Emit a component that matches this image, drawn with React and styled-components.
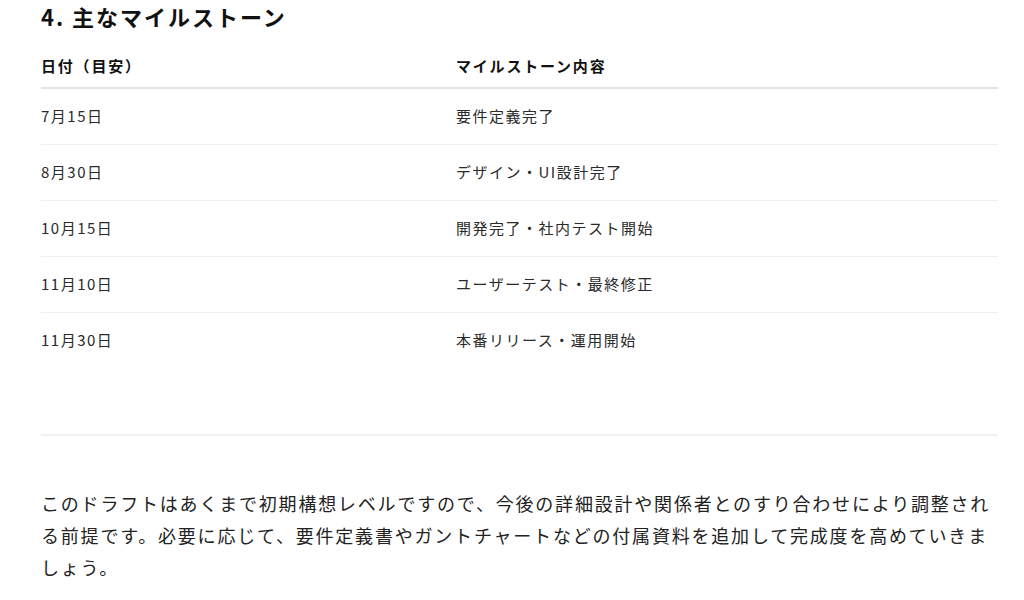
import React from "react";
import styled, { createGlobalStyle } from "styled-components";

const Global = createGlobalStyle`
  html, body { margin: 0; padding: 0; background: #ffffff; }
  body {
    font-family: "Noto Sans CJK JP", "Noto Sans", sans-serif;
    color: #1f1f1f;
  }
`;

const Page = styled.div`
  padding: 0 26px 0 41px;
`;

const Heading = styled.h2`
  margin: 0;
  padding-top: 2px;
  font-size: 22px;
  line-height: 28px;
  font-weight: 700;
  letter-spacing: 0.09em;
  color: #111;
`;

const Table = styled.table`
  width: 100%;
  border-collapse: collapse;
  margin-top: 17px;
`;

const HeadCell = styled.th`
  text-align: left;
  padding: 8px 0 10px;
  line-height: 22px;
  vertical-align: middle;
  font-size: 15px;
  font-weight: 700;
  letter-spacing: 0.12em;
  color: #111;
  border-bottom: 2px solid #e4e4e4;
  width: ${(p) => (p.$first ? "415px" : "auto")};
`;

const Cell = styled.td`
  padding: 16px 0 17px;
  line-height: 22px;
  vertical-align: middle;
  font-size: 15px;
  letter-spacing: 0.1em;
  color: #2a2a2a;
  border-bottom: ${(p) => (p.$last ? "none" : "1px solid #efefef")};
`;

const Rule = styled.hr`
  border: none;
  border-top: 2px solid #f1f1f1;
  margin: 66px 0 0;
`;

const Paragraph = styled.p`
  margin: 51px 0 0;
  font-size: 18px;
  line-height: 32px;
  letter-spacing: 0.1em;
  color: #222;
`;

const rows = [
  ["7月15日", "要件定義完了"],
  ["8月30日", "デザイン・UI設計完了"],
  ["10月15日", "開発完了・社内テスト開始"],
  ["11月10日", "ユーザーテスト・最終修正"],
  ["11月30日", "本番リリース・運用開始"],
];

export default function App() {
  return (
    <Page>
      <Global />
      <Heading>4. 主なマイルストーン</Heading>
      <Table>
        <thead>
          <tr>
            <HeadCell $first>日付（目安）</HeadCell>
            <HeadCell>マイルストーン内容</HeadCell>
          </tr>
        </thead>
        <tbody>
          {rows.map(([d, m], i) => (
            <tr key={d}>
              <Cell $last={i === rows.length - 1}>{d}</Cell>
              <Cell $last={i === rows.length - 1}>{m}</Cell>
            </tr>
          ))}
        </tbody>
      </Table>
      <Rule />
      <Paragraph>
        このドラフトはあくまで初期構想レベルですので、今後の詳細設計や関係者とのすり合わせにより調整される前提です。必要に応じて、要件定義書やガントチャートなどの付属資料を追加して完成度を高めていきましょう。
      </Paragraph>
    </Page>
  );
}
